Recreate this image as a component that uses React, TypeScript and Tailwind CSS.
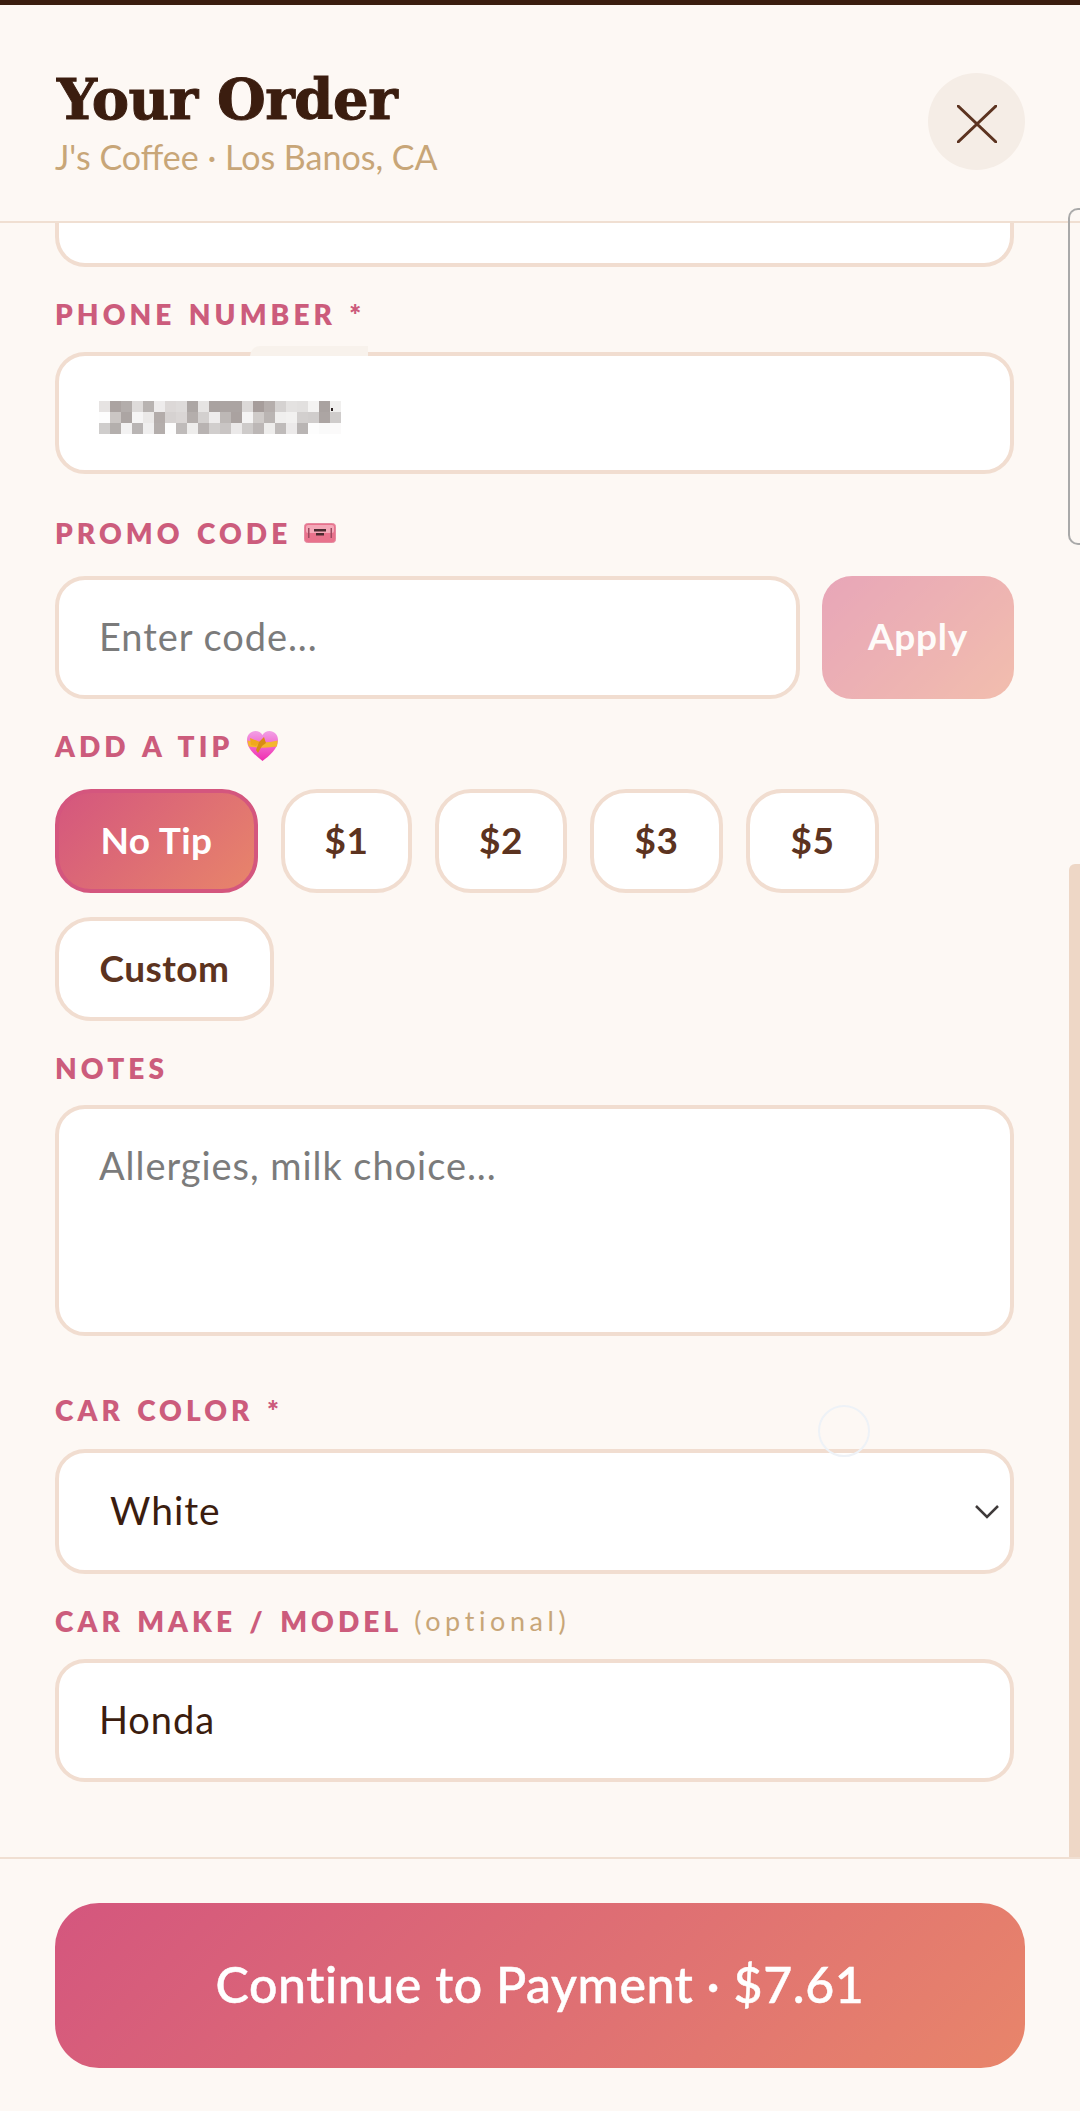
const sans = "font-['Lato','Noto_Sans',sans-serif]";

const mosaic = [
  ["#e6e3e2", "#aba3a1", "#b3adab", "#dedbda", "#b8b3b1", "#eeecec", "#dcd8d7", "#dedbda", "#aca6a4", "#e6e4e3", "#a9a2a0", "#aba4a2", "#aba4a2", "#dcd9d8", "#a69d9b", "#b5aeac", "#d5d2d1", "#e4e2e1", "#e2e0df", "#f4f3f2", "#a9a2a0", "#f0efee"],
  ["#fdfdfd", "#cbc6c4", "#aca5a3", "#f6f5f5", "#ebe9e8", "#b3acaa", "#d6d2d1", "#dad6d5", "#b4aeac", "#d3d0cf", "#eeecec", "#bdb8b6", "#aaa2a0", "#f5f4f4", "#cfcbc9", "#bab5b3", "#f0efee", "#f2f1f0", "#d2cfce", "#d0cdcc", "#aca5a3", "#cfcccb"],
  ["#cfcdcc", "#b4afad", "#f3f2f2", "#b9b5b4", "#f0efef", "#b4aeac", "#fdfdfd", "#bfbbba", "#eeedec", "#b8b3b2", "#d1cecd", "#c9c5c4", "#ebe9e9", "#cecbca", "#bcb7b6", "#eeedec", "#bfbbba", "#eceaea", "#b9b5b4", "#fdfdfd", "#fafafa", "#fbfafa"],
];

function Label({ className, children }: { className: string; children: React.ReactNode }) {
  return (
    <div className={`flex h-[38px] items-center text-[28px] font-extrabold uppercase tracking-[0.145em] text-[#cc5c7c] [word-spacing:0.1em] ${className}`}>
      {children}
    </div>
  );
}

const fieldClass =
  "block w-full rounded-[30px] border-4 border-[#f1ddd0] bg-white px-[40px] pb-[3px] text-[38px] tracking-[0.025em] text-[#3b1d0f] outline-none placeholder:text-[#7b7b7b]";

function TipButton({ label, active, className }: { label: string; active?: boolean; className: string }) {
  return (
    <button
      className={`h-[104px] rounded-[36px] border-4 pb-[3px] text-[37px] font-bold tracking-[0.012em] ${className} ${
        active
          ? "border-[#d4567e] bg-[linear-gradient(135deg,#d4567e,#e8856a)] text-white"
          : "border-[#f1ddd0] bg-white text-[#5c3320]"
      }`}
    >
      {label}
    </button>
  );
}

function TicketEmoji() {
  return (
    <svg viewBox="0 0 32 20" className="ml-[13px] h-[20px] w-[32px]">
      <rect x="0.500" y="0.500" width="31" height="19" rx="3" fill="#e8728c" stroke="#e58aa0" />
      <rect x="2" y="2" width="28" height="8" rx="2" fill="#f4a8b8" />
      <rect x="4" y="5" width="1.500" height="10" fill="#9c4a60" />
      <rect x="26.500" y="5" width="1.500" height="10" fill="#9c4a60" />
      <rect x="10" y="6" width="12" height="2.500" fill="#4a2a30" />
      <rect x="12" y="10" width="8" height="2.500" fill="#4a2a30" />
    </svg>
  );
}

function HeartEmoji() {
  return (
    <svg viewBox="0 0 31 30" className="ml-[14px] h-[30px] w-[31px]">
      <defs>
        <linearGradient id="heart" x1="0" y1="0" x2="0" y2="1">
          <stop offset="0" stopColor="#f2a0e6" />
          <stop offset="1" stopColor="#f02cb0" />
        </linearGradient>
      </defs>
      <path d="M15.500 30C9 25 0 18 0 9C0 3.500 4 0 8.500 0C11.500 0 14 1.500 15.500 4C17 1.500 19.500 0 22.500 0C27 0 31 3.500 31 9C31 18 22 25 15.500 30Z" fill="url(#heart)" />
      <path d="M0.300 9.500C10 12 21 12 30.700 9.500L30 15.500C21 17 12 17 1.800 15.500Z" fill="#f5b72e" />
      <path d="M3 7L13 11L9 15L4 14Z" fill="#f0a81e" />
      <path d="M12 11L17 6L19 12L15 15L11 22L9 19Z" fill="#d98c14" />
    </svg>
  );
}

export default function App() {
  return (
    <div className={`relative flex h-[2111px] w-[1080px] flex-col overflow-hidden bg-[#fdf8f4] ${sans}`}>
      <div className="h-[5px] shrink-0 bg-[#3b1d0f]" />

      {/* Header */}
      <div className="flex h-[218px] shrink-0 items-start justify-between border-b-2 border-[#f0dfd2] pl-[55px] pr-[55px]">
        <div className="pt-[59px]">
          <h1 className="ml-[2px] font-['DejaVu_Serif',serif] text-[56px] font-bold leading-[70px] tracking-[-0.008em] text-[#3b1d0f] [-webkit-text-stroke:1px_#3b1d0f]">
            Your Order
          </h1>
          <p className="mt-[2px] text-[34px] leading-[42px] text-[#c8a678]">J's Coffee · Los Banos, CA</p>
        </div>
        <button className="mt-[68px] flex h-[97px] w-[97px] items-center justify-center rounded-full bg-[#f5ede6]">
          <svg viewBox="0 0 40 38" className="mt-[5px] h-[38px] w-[40px]" fill="none" stroke="#5c3320" strokeWidth="3" strokeLinecap="round">
            <path d="M1 1L39 37M39 1L1 37" />
          </svg>
        </button>
      </div>

      {/* Form */}
      <div className="flex-1 pl-[55px] pr-[66px]">
        <div className="h-[44px] rounded-b-[30px] border-4 border-t-0 border-[#f1ddd0] bg-white" />

        <Label className="mt-[28px]">Phone Number *</Label>
        <div className="relative mt-[19px] flex h-[122px] items-center rounded-[30px] border-4 border-[#f1ddd0] bg-white pl-[40px] pt-[8px]">
          <svg width="242" height="33" viewBox="0 0 22 3" shapeRendering="crispEdges">
            {mosaic.map((row, y) => row.map((fill, x) => <rect key={`${x}-${y}`} x={x} y={y} width="1" height="1" fill={fill} />))}
          </svg>
        </div>

        <Label className="mt-[40px]">
          Promo Code
          <TicketEmoji />
        </Label>
        <div className="mt-[24px] flex gap-[22px]">
          <input placeholder="Enter code..." className={`${fieldClass} h-[123px] min-w-0 flex-1`} />
          <button className="h-[123px] w-[192px] shrink-0 rounded-[30px] bg-[linear-gradient(135deg,#d4567e,#e8856a)] pb-[3px] text-[37px] font-bold tracking-[0.02em] text-white opacity-50">
            Apply
          </button>
        </div>

        <Label className="mt-[28px]">
          Add a Tip
          <HeartEmoji />
        </Label>
        <div className="mt-[24px] flex flex-wrap gap-x-[23px] gap-y-[24px]">
          <TipButton label="No Tip" active className="w-[203px]" />
          <TipButton label="$1" className="w-[131px]" />
          <TipButton label="$2" className="w-[132px]" />
          <TipButton label="$3" className="w-[133px]" />
          <TipButton label="$5" className="w-[133px]" />
          <TipButton label="Custom" className="w-[219px]" />
        </div>

        <Label className="mt-[28px]">Notes</Label>
        <textarea
          placeholder="Allergies, milk choice..."
          className={`${fieldClass} mt-[18px] h-[231px] resize-none pt-[33px] leading-[46px]`}
        />

        <Label className="mt-[55px]">Car Color *</Label>
        <div className="relative mt-[20px]">
          <select className={`${fieldClass} h-[125px] appearance-none pl-[51px] text-[39px]`} defaultValue="White">
            <option>White</option>
          </select>
          <svg viewBox="0 0 24 14" className="pointer-events-none absolute right-[15px] top-[56px] h-[14px] w-[24px]" fill="none" stroke="#3f3a3a" strokeWidth="2.500">
            <path d="M1 1L12 12L23 1" />
          </svg>
        </div>

        <Label className="mt-[28px]">
          Car Make / Model
          <span className="ml-[12px] text-[27px] font-normal normal-case tracking-[0.17em] text-[#c8a678]">(optional)</span>
        </Label>
        <input defaultValue="Honda" className={`${fieldClass} mt-[19px] h-[123px]`} />
      </div>

      {/* Footer */}
      <div className="h-[254px] shrink-0 border-t-2 border-[#f0dfd2] px-[55px] pt-[44px]">
        <button className="h-[165px] w-full rounded-[44px] bg-[linear-gradient(135deg,#d4567e,#e8856a)] pb-[3px] text-[50px] font-medium tracking-[0.012em] text-white [-webkit-text-stroke:0.5px_#ffffff]">
          Continue to Payment · $7.61
        </button>
      </div>

      {/* Scroll bars and screen-recording marks lying over the form */}
      <div className="absolute right-0 top-[864px] h-[993px] w-[11px] rounded-tl-[6px] bg-[#eed7c6]" />
      <div className="absolute right-0 top-[208px] h-[337px] w-[12px] rounded-l-[10px] border-y-2 border-l-2 border-[#a9a9a9] bg-transparent" />
      <div className="absolute left-[818px] top-[1405px] h-[52px] w-[52px] rounded-full border-2 border-[#eef2f7]" />
      <div className="absolute left-[250px] top-[346px] h-[10px] w-[118px] rounded-tl-[24px] bg-[#f8f2ec]" />
      <div className="absolute left-[331px] top-[408px] h-[3px] w-[2px] bg-[#2a2020]" />
    </div>
  );
}
